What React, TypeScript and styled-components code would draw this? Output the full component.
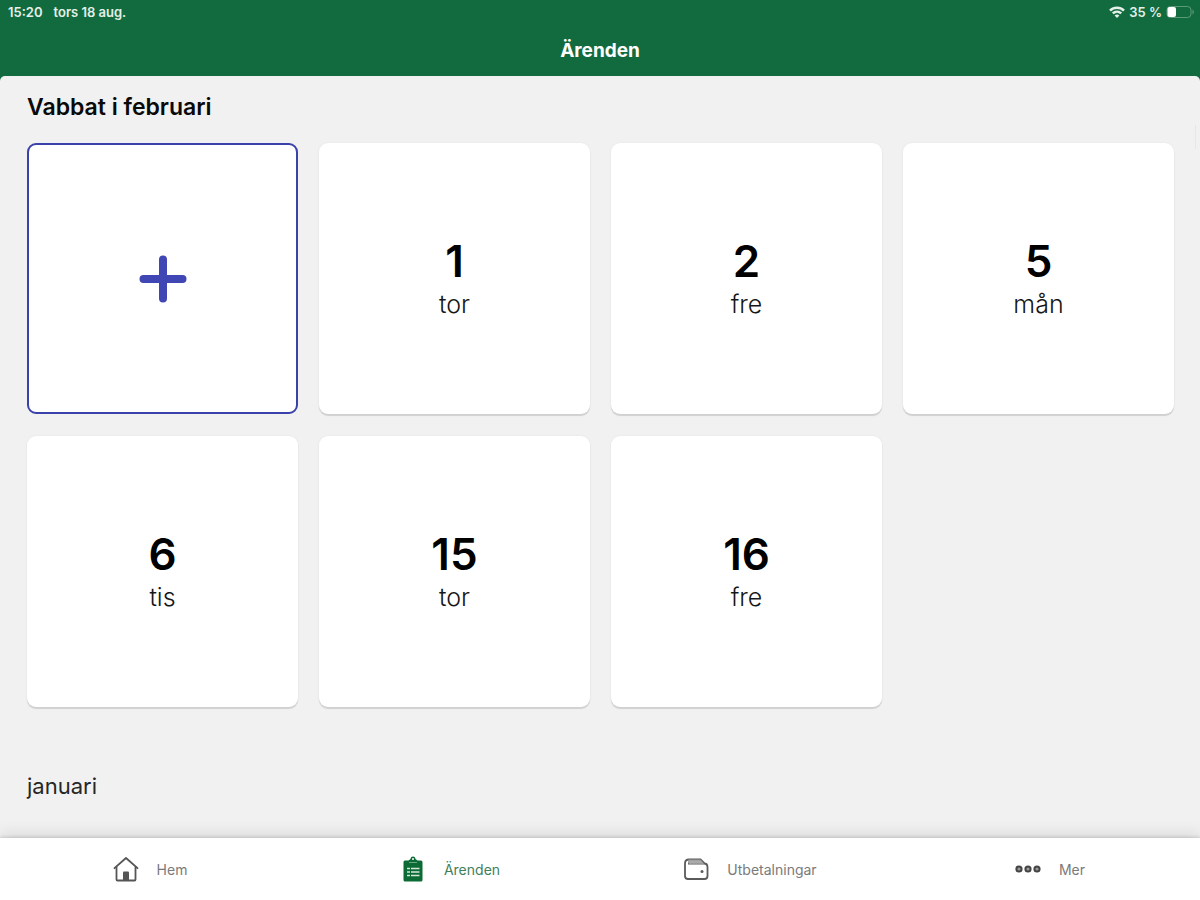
import React from "react";
import styled, { createGlobalStyle } from "styled-components";

const GlobalStyle = createGlobalStyle`
  *, *::before, *::after { box-sizing: border-box; }
  body {
    margin: 0;
    background: #f1f1f1;
    color: #0a0a0a;
    font-family: Inter, "Liberation Sans", sans-serif;
  }
`;

const Page = styled.div`
  display: flex;
  flex-direction: column;
  min-height: 100vh;
  background: #126b3f;
`;

const Header = styled.header`
  color: #fff;
`;

const StatusBar = styled.div`
  display: flex;
  align-items: center;
  justify-content: space-between;
  height: 24px;
  padding: 0 5px 0 8px;
  font-size: 13px;
  font-weight: 600;
  color: #e4f0e9;
`;

const StatusGroup = styled.div<{ $gap: number }>`
  display: flex;
  align-items: center;
  gap: ${(p) => p.$gap}px;
`;

const Title = styled.h1`
  margin: 0;
  padding: 12px 0 11px;
  font-size: 19px;
  line-height: 29px;
  font-weight: 700;
  text-align: center;
`;

const Content = styled.main`
  position: relative;
  flex: 1;
  padding: 17px 26px 24px 27px;
  background: #f1f1f1;
  border-radius: 5px 5px 0 0;
`;

const ScrollThumb = styled.span`
  position: absolute;
  top: 49px;
  right: 4px;
  width: 1px;
  height: 24px;
  background: #e6e6e6;
`;

const MonthHeading = styled.h2<{ $current?: boolean }>`
  margin: 0;
  font-size: ${(p) => (p.$current ? 23 : 22)}px;
  line-height: 28px;
  font-weight: ${(p) => (p.$current ? 600 : 400)};
  color: ${(p) => (p.$current ? "#0a0a0a" : "#262626")};
`;

const DayGrid = styled.ul`
  display: grid;
  grid-template-columns: repeat(4, 1fr);
  gap: 22px 21px;
  margin: 22px 0 65px;
  padding: 0;
  list-style: none;
`;

const DayCard = styled.li`
  display: flex;
  flex-direction: column;
  align-items: center;
  justify-content: center;
  aspect-ratio: 1;
  background: #fff;
  border-radius: 9px;
  box-shadow: 0 2px 1px #d0d0d0, 0 0 2px #e2e2e2;
`;

const AddButton = styled.button`
  display: flex;
  align-items: center;
  justify-content: center;
  width: 100%;
  height: 100%;
  padding: 0;
  background: #fff;
  border: 2px solid #3a41ab;
  border-radius: 9px;
  cursor: pointer;
`;

const DayNumber = styled.strong`
  font-size: 44px;
  line-height: 50px;
  font-weight: 600;
  color: #000;
`;

const DayName = styled.span`
  font-size: 25px;
  line-height: 36px;
  font-weight: 300;
  color: #161616;
`;

const TabBar = styled.nav`
  position: sticky;
  bottom: 0;
  display: grid;
  grid-template-columns: repeat(4, 1fr);
  height: 62px;
  background: #fff;
  box-shadow: 0 -1px 3px rgba(0, 0, 0, 0.14), 0 -5px 14px rgba(0, 0, 0, 0.09);
`;

const Tab = styled.a<{ $active?: boolean }>`
  display: flex;
  align-items: center;
  justify-content: center;
  gap: 18px;
  font-size: 14px;
  font-weight: 400;
  text-decoration: none;
  color: ${(p) => (p.$active ? "#3f7f5c" : "#7a7a7a")};
`;

const WifiIcon = () => (
  <svg width="16" height="12" viewBox="0 0 16 12" fill="none" stroke="#e4f0e9" strokeWidth="2.6" aria-hidden="true">
    <path d="M1 4.6C5 .8 11 .8 15 4.6" />
    <path d="M3.8 7.4c2.4-2.2 6-2.2 8.4 0" />
    <path d="M8 12 5.6 9.5c1.4-1.2 3.4-1.2 4.8 0z" fill="#e4f0e9" stroke="none" />
  </svg>
);

const BatteryIcon = () => (
  <svg width="29" height="14" viewBox="0 0 29 14" aria-hidden="true">
    <rect x="1" y="1.5" width="24" height="11" rx="3.5" fill="none" stroke="#5c9a7a" />
    <path d="M26.5 4.5c1.8.8 1.8 4.2 0 5z" fill="#5c9a7a" />
    <rect x="1.5" y="2" width="8.5" height="10" rx="2" fill="#fff" />
  </svg>
);

const PlusIcon = () => (
  <svg width="48" height="48" viewBox="0 0 48 48" stroke="#4046b4" strokeWidth="8" strokeLinecap="round" aria-hidden="true">
    <path d="M24 4.5v39M4.5 24h39" />
  </svg>
);

const HomeIcon = () => (
  <svg width="26" height="26" viewBox="0 0 26 26" fill="none" stroke="#555" strokeWidth="1.8" strokeLinejoin="round" strokeLinecap="round" aria-hidden="true">
    <path d="M1.5 12.2 13 2l11.5 10.2" />
    <path d="M3.5 11v12.5q0 1 1 1h17q1 0 1-1V11" />
    <path d="M10 24.5v-8q0-1 1-1h4q1 0 1 1v8z" fill="#555" stroke="none" />
  </svg>
);

const ClipboardIcon = () => (
  <svg width="26" height="26" viewBox="0 0 26 26" aria-hidden="true">
    <path d="M5 4.5h3.5l2-1.5c.3-3.3 4.7-3.3 5 0l2 1.5H21q1.5 0 1.5 1.5v18q0 1.5-1.5 1.5H5Q3.500 25.500 3.500 24V6q0-1.500 1.500-1.500z" fill="#0c6a35" />
    <circle cx="13" cy="3" r="1" fill="#fff" />
    <path d="M9 6.500h8" stroke="#6aa684" strokeWidth="1" />
    <path d="M7 12.500h3M11 12.500h8.500M7 16h3M11 16h8.500M7 19.500h3M11 19.500h8.500" stroke="#d4e6db" strokeWidth="1.7" />
  </svg>
);

const WalletIcon = () => (
  <svg width="26" height="26" viewBox="0 0 26 26" fill="none" stroke="#5a5a5a" strokeWidth="1.8" strokeLinejoin="round" aria-hidden="true">
    <path d="M5 7.500h16q3.500 0 3.500 3.500V20q0 3-3 3H5q-3 0-3-3V7.500q0-4 4-4h11.500l4 4" />
    <path d="M5.500 4h12l3 3.500H6z" fill="#aaa" stroke="#999" strokeWidth="1" />
    <circle cx="19" cy="15.500" r="1.500" fill="#5a5a5a" stroke="none" />
  </svg>
);

const MoreIcon = () => (
  <svg width="26" height="26" viewBox="0 0 26 26" fill="#999" stroke="#444" strokeWidth="2" aria-hidden="true">
    <circle cx="4" cy="13" r="2.6" />
    <circle cx="13" cy="13" r="2.6" />
    <circle cx="22" cy="13" r="2.6" />
  </svg>
);

const days = [
  { date: 1, name: "tor" },
  { date: 2, name: "fre" },
  { date: 5, name: "mån" },
  { date: 6, name: "tis" },
  { date: 15, name: "tor" },
  { date: 16, name: "fre" },
];

const tabs = [
  { label: "Hem", href: "#hem", Icon: HomeIcon },
  { label: "Ärenden", href: "#arenden", Icon: ClipboardIcon, active: true },
  { label: "Utbetalningar", href: "#utbetalningar", Icon: WalletIcon },
  { label: "Mer", href: "#mer", Icon: MoreIcon },
];

export default function App() {
  return (
    <Page>
      <GlobalStyle />
      <Header>
        <StatusBar>
          <StatusGroup $gap={11}>
            <span>15:20</span>
            <span>tors 18 aug.</span>
          </StatusGroup>
          <StatusGroup $gap={4}>
            <WifiIcon />
            <span>35 %</span>
            <BatteryIcon />
          </StatusGroup>
        </StatusBar>
        <Title>Ärenden</Title>
      </Header>
      <Content>
        <ScrollThumb />
        <MonthHeading $current>Vabbat i februari</MonthHeading>
        <DayGrid>
          <li>
            <AddButton type="button" aria-label="Lägg till dag">
              <PlusIcon />
            </AddButton>
          </li>
          {days.map((day) => (
            <DayCard key={day.date}>
              <DayNumber>{day.date}</DayNumber>
              <DayName>{day.name}</DayName>
            </DayCard>
          ))}
        </DayGrid>
        <MonthHeading>januari</MonthHeading>
      </Content>
      <TabBar>
        {tabs.map(({ label, href, Icon, active }) => (
          <Tab key={label} href={href} $active={active} aria-current={active ? "page" : undefined}>
            <Icon />
            <span>{label}</span>
          </Tab>
        ))}
      </TabBar>
    </Page>
  );
}
